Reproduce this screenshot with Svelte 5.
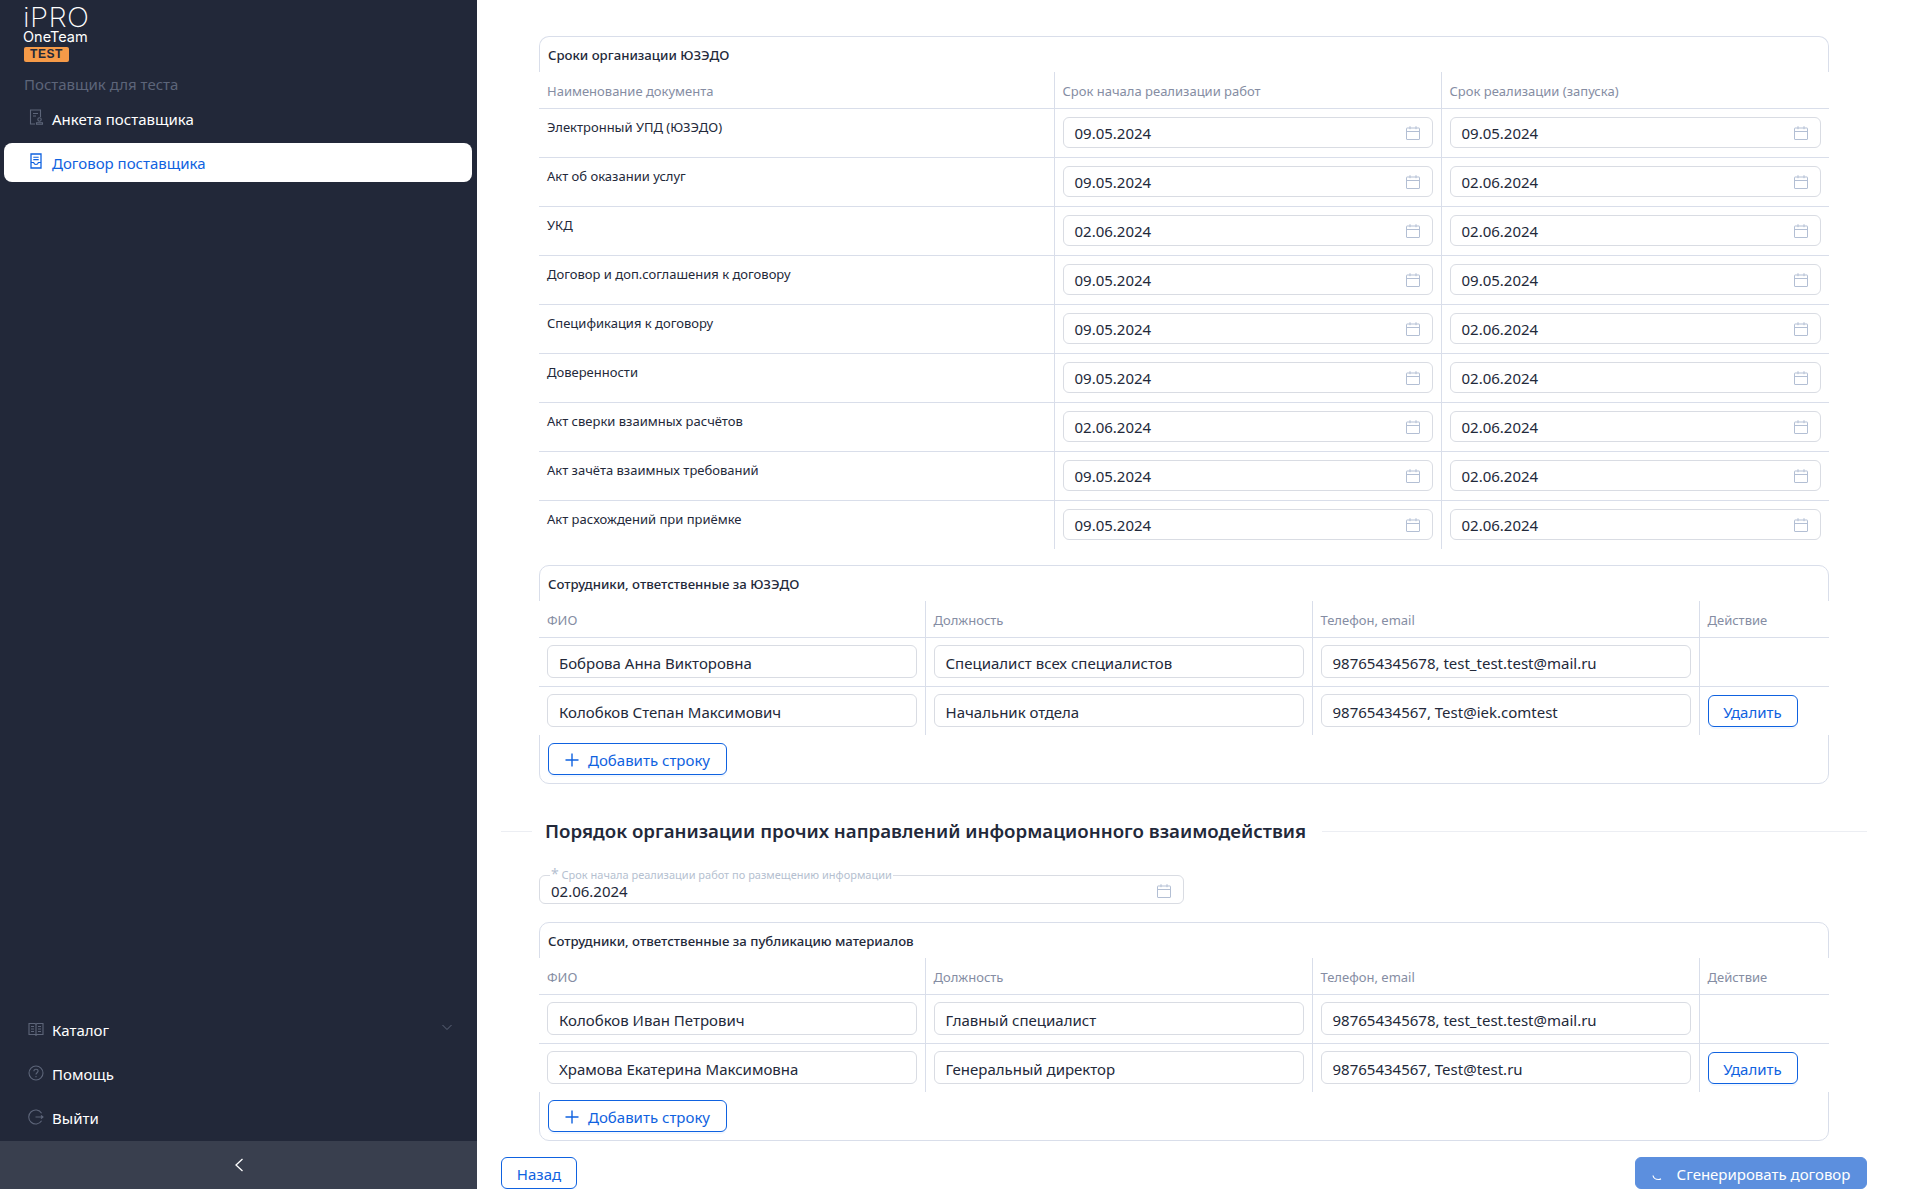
<script>
  // Sidebar menus
  const topMenu = [
    { label: 'Анкета поставщика', icon: 'form', active: false },
    { label: 'Договор поставщика', icon: 'doc', active: true }
  ];
  const bottomMenu = [
    { label: 'Каталог', icon: 'book', chevron: true },
    { label: 'Помощь', icon: 'help' },
    { label: 'Выйти', icon: 'exit' }
  ];

  // Сроки организации ЮЗЭДО
  const deadlines = [
    ['Электронный УПД (ЮЗЭДО)', '09.05.2024', '09.05.2024'],
    ['Акт об оказании услуг', '09.05.2024', '02.06.2024'],
    ['УКД', '02.06.2024', '02.06.2024'],
    ['Договор и доп.соглашения к договору', '09.05.2024', '09.05.2024'],
    ['Спецификация к договору', '09.05.2024', '02.06.2024'],
    ['Доверенности', '09.05.2024', '02.06.2024'],
    ['Акт сверки взаимных расчётов', '02.06.2024', '02.06.2024'],
    ['Акт зачёта взаимных требований', '09.05.2024', '02.06.2024'],
    ['Акт расхождений при приёмке', '09.05.2024', '02.06.2024']
  ];

  const employeeGroups = [
    {
      title: 'Сотрудники, ответственные за ЮЗЭДО',
      rows: [
        ['Боброва Анна Викторовна', 'Специалист всех специалистов', '987654345678, test_test.test@mail.ru'],
        ['Колобков Степан Максимович', 'Начальник отдела', '98765434567, Test@iek.comtest']
      ]
    },
    {
      title: 'Сотрудники, ответственные за публикацию материалов',
      rows: [
        ['Колобков Иван Петрович', 'Главный специалист', '987654345678, test_test.test@mail.ru'],
        ['Храмова Екатерина Максимовна', 'Генеральный директор', '98765434567, Test@test.ru']
      ]
    }
  ];
</script>

{#snippet calendar()}
  <svg class="cal" viewBox="0 0 16 16" width="16" height="16" fill="none" stroke="currentColor" stroke-width="1">
    <rect x="1.5" y="3" width="13" height="11.5" rx="0.5" />
    <path d="M1.5 6.5h13M5 1.2v3M11 1.2v3" />
  </svg>
{/snippet}

{#snippet menuIcon(name)}
  <svg class="menu-icon" viewBox="0 0 16 16" width="16" height="16" fill="none" stroke="currentColor" stroke-width="1.1">
    {#if name === 'form'}
      <path d="M7 15H2.5V1h10v7" />
      <path d="M5 4.5h5M5 7h3" />
      <circle cx="11.5" cy="10.5" r="1.7" />
      <path d="M8.5 15.2v-1.4h6v1.4z" />
    {:else if name === 'doc'}
      <path d="M3 1h10v14H3z" stroke-width="1.3" />
      <path d="M5.3 4.2h5.4M5.3 6.6h5.4M3 9.5h2.6c.4 1.4 1.2 2 2.4 2s2-.6 2.4-2H13" stroke-width="1.1" />
    {:else if name === 'book'}
      <path d="M1 2.5h6l1 1 1-1h6v11H9l-1 .8-1-.8H1zM8 3.5v10" />
      <path d="M3 5.5h3M3 8h3M3 10.5h3M10 5.5h3M10 8h3M10 10.5h3" />
    {:else if name === 'help'}
      <circle cx="8" cy="8" r="7" />
      <path d="M5.9 6.2c0-1.2 1-2 2.1-2s2.1.8 2.1 1.9c0 1.6-2.1 1.7-2.1 3.4" />
      <path d="M8 11v1.2" />
    {:else}
      <path d="M13.6 4.2A7 7 0 1 0 13.6 11.8" />
      <path d="M7.5 8h7.5M13 6.3 15 8l-2 1.7" />
    {/if}
  </svg>
{/snippet}

{#snippet employeesCard(group)}
  <section class="card">
    <h4 class="card-title">{group.title}</h4>
    <table class="table employees">
      <thead>
        <tr><th>ФИО</th><th>Должность</th><th>Телефон, email</th><th>Действие</th></tr>
      </thead>
      <tbody>
        {#each group.rows as row, i}
          <tr>
            {#each row as value}
              <td><div class="input text-input">{value}</div></td>
            {/each}
            <td>
              {#if i > 0}<button class="btn delete">Удалить</button>{/if}
            </td>
          </tr>
        {/each}
      </tbody>
    </table>
    <div class="card-footer">
      <button class="btn add">
        <svg viewBox="0 0 14 14" width="14" height="14" fill="none" stroke="currentColor" stroke-width="1.4"><path d="M7 .5v13M.5 7h13" /></svg>
        Добавить строку
      </button>
    </div>
  </section>
{/snippet}

<div class="layout">
  <aside class="sidebar">
    <div class="logo">
      <div class="logo-ipro">iPRO</div>
      <div class="logo-team">OneTeam</div>
      <div class="logo-badge">TEST</div>
    </div>
    <div class="supplier">Поставщик для теста</div>
    <nav class="menu">
      {#each topMenu as item}
        <a class="menu-item" class:active={item.active} href="#top">
          {@render menuIcon(item.icon)}
          <span>{item.label}</span>
        </a>
      {/each}
    </nav>
    <nav class="menu bottom">
      {#each bottomMenu as item}
        <a class="menu-item low" href="#top">
          {@render menuIcon(item.icon)}
          <span>{item.label}</span>
          {#if item.chevron}
            <svg class="chevron" viewBox="0 0 12 12" width="12" height="12" fill="none" stroke="currentColor"><path d="M1.5 4 6 8.5 10.5 4" /></svg>
          {/if}
        </a>
      {/each}
    </nav>
    <div class="collapse">
      <svg viewBox="0 0 12 16" width="12" height="16" fill="none" stroke="currentColor" stroke-width="1.3"><path d="M9.5 2 3 8l6.5 6" /></svg>
    </div>
  </aside>

  <main class="main">
    <div class="content">
      <section class="card first">
        <h4 class="card-title">Сроки организации ЮЗЭДО</h4>
        <table class="table deadlines">
          <thead>
            <tr><th>Наименование документа</th><th>Срок начала реализации работ</th><th>Срок реализации (запуска)</th></tr>
          </thead>
          <tbody>
            {#each deadlines as [name, start, launch]}
              <tr>
                <td class="doc-name">{name}</td>
                <td><div class="input date-input">{start}{@render calendar()}</div></td>
                <td><div class="input date-input">{launch}{@render calendar()}</div></td>
              </tr>
            {/each}
          </tbody>
        </table>
      </section>

      {@render employeesCard(employeeGroups[0])}

      <div class="divider">
        <span>Порядок организации прочих направлений информационного взаимодействия</span>
      </div>

      <div class="float-field">
        <span class="float-label"><i>*</i> Срок начала реализации работ по размещению информации</span>
        <div class="float-value">02.06.2024{@render calendar()}</div>
      </div>

      {@render employeesCard(employeeGroups[1])}
    </div>

    <div class="actions">
      <button class="btn back">Назад</button>
      <button class="btn generate">
        <svg viewBox="0 0 14 14" width="14" height="14" fill="none" stroke="currentColor" stroke-width="1.2"><path d="M1 8.5c.5 2.5 2.8 4 5.5 4 1 0 1.7-.2 2.5-.6" /></svg>
        Сгенерировать договор
      </button>
    </div>
  </main>
</div>

<style>
  :global(body) {
    margin: 0;
    background: #fff;
    overflow: hidden;
  }

  .layout {
    display: flex;
    height: 1189px;
    overflow: hidden;
    font-family: "Noto Sans", "Open Sans", sans-serif;
    color: #23293a;
  }

  /* === Sidebar === */
  .sidebar {
    width: 477px;
    flex: none;
    background: #222839;
    display: flex;
    flex-direction: column;
    color: #fff;
  }

  .logo {
    padding: 6px 0 0 23px;
  }

  .logo-ipro {
    font-family: Inter, sans-serif;
    font-weight: 200;
    font-size: 27px;
    line-height: 23px;
    letter-spacing: 0.4px;
    transform: scaleX(1.08);
    transform-origin: left center;
  }

  .logo-team {
    font-family: Inter, sans-serif;
    font-weight: 400;
    font-size: 14.5px;
    line-height: 15px;
  }

  .logo-badge {
    width: 45px;
    height: 15px;
    margin: 3px 0 0 1px;
    background: #f59a48;
    border-radius: 2px;
    color: #222839;
    font-family: "Liberation Sans", sans-serif;
    font-weight: 700;
    font-size: 12px;
    line-height: 15px;
    letter-spacing: 0.6px;
    text-align: center;
  }

  .supplier {
    margin: 12px 0 0 24px;
    color: #5d6579;
    font-size: 15px;
    line-height: 20px;
  }

  .menu {
    display: flex;
    flex-direction: column;
    padding: 0 5px 0 4px;
    gap: 5px;
    margin-top: 5px;
  }

  .menu.bottom {
    margin-top: auto;
    gap: 4px;
  }

  .menu-item {
    display: flex;
    align-items: center;
    gap: 8px;
    height: 39px;
    padding-left: 24px;
    border-radius: 8px;
    color: #fff;
    font-size: 15px;
    text-decoration: none;
    position: relative;
  }

  .menu-item .menu-icon {
    color: #5d6579;
    margin-top: -3px;
  }

  .menu-item.low {
    height: 40px;
  }

  .menu-item.active {
    background: #fff;
    color: #0f62e0;
  }

  .menu-item.active .menu-icon {
    color: #0f62e0;
  }

  .chevron {
    position: absolute;
    right: 19px;
    top: 11px;
    color: #5d6579;
  }

  .collapse {
    height: 48px;
    margin-top: 3px;
    background: #393f4e;
    display: flex;
    align-items: center;
    justify-content: center;
  }

  /* === Main === */
  .main {
    flex: 1;
    min-width: 0;
    padding: 36px 41px 0 24px;
    display: flex;
    flex-direction: column;
  }

  .content {
    padding: 0 38px;
    display: flex;
    flex-direction: column;
  }

  .card {
    border: 1px solid #d9deea;
    border-radius: 10px;
  }

  .card.first {
    border-bottom: none;
    border-radius: 10px 10px 0 0;
    margin-bottom: 16px;
  }

  .card-title {
    margin: 0;
    height: 35px;
    padding: 0 8px;
    font-size: 13.2px;
    line-height: 36px;
    font-weight: 500;
    color: #23293a;
  }

  .table {
    width: calc(100% + 2px);
    margin: 0 -1px;
    border-collapse: collapse;
    table-layout: fixed;
    background: #fff;
    position: relative;
  }

  .table th {
    box-sizing: border-box;
    height: 36px;
    padding: 2px 8px 0;
    text-align: left;
    font-weight: 400;
    font-size: 13px;
    color: #858da3;
    border-bottom: 1px solid #d9deea;
  }

  .table td {
    box-sizing: border-box;
    height: 49px;
    padding: 0 8px;
    font-size: 13px;
    border-bottom: 1px solid #d9deea;
  }

  .table tbody tr:last-child td {
    border-bottom: none;
  }

  .table th + th,
  .table td + td {
    border-left: 1px solid #d9deea;
  }

  .deadlines th:first-child {
    width: 515px;
  }

  .deadlines th:nth-child(2) {
    width: 387px;
  }

  .employees th:first-child {
    width: 386px;
  }

  .employees th:nth-child(2),
  .employees th:nth-child(3) {
    width: 387px;
  }

  .doc-name {
    vertical-align: top;
    padding-top: 9px !important;
    line-height: 18px;
  }

  .input {
    box-sizing: border-box;
    border: 1px solid #d9dce3;
    border-radius: 6px;
    background: #fff;
    color: #23293a;
    font-size: 15px;
    display: flex;
    align-items: center;
    justify-content: space-between;
    padding: 0 11px;
  }

  .date-input {
    height: 31px;
  }

  .text-input {
    height: 33px;
    padding-top: 2px;
  }

  .cal {
    color: #b3bfd4;
    flex: none;
  }

  .card-footer {
    padding: 8px;
    height: 32px;
  }

  .btn {
    box-sizing: border-box;
    font-family: inherit;
    font-size: 15px;
    border-radius: 6px;
    background: #fff;
    color: #0f62e0;
    border: 1px solid #0f62e0;
    height: 32px;
    padding: 2px 0 0;
    display: inline-flex;
    align-items: center;
    justify-content: center;
    box-shadow: 0 2px 0 rgba(5, 95, 255, 0.05);
  }

  .add {
    width: 179px;
    gap: 9px;
  }

  .delete {
    width: 90px;
  }

  /* === Section heading === */
  .divider {
    display: flex;
    align-items: center;
    margin: 25px -38px 0;
    height: 44px;
    font-size: 18.7px;
    font-weight: 600;
    color: #23293a;
    line-height: 28px;
  }

  .divider::before,
  .divider::after {
    content: '';
    height: 1px;
    background: #eceef3;
  }

  .divider::before {
    width: 31px;
    margin-right: 13px;
  }

  .divider::after {
    flex: 1;
    margin-left: 16px;
  }

  /* === Floating label date === */
  .float-field {
    position: relative;
    box-sizing: border-box;
    width: 645px;
    height: 29px;
    margin: 22px 0 18px;
    border: 1px solid #d9dce3;
    border-radius: 6px;
    padding: 0 11px;
  }

  .float-label {
    position: absolute;
    left: 10px;
    top: -9px;
    padding: 0 1px;
    background: #fff;
    color: #b5bfd0;
    font-size: 11px;
    line-height: 14px;
  }

  .float-label i {
    font-style: normal;
    font-size: 14px;
  }

  .float-value {
    display: flex;
    align-items: center;
    justify-content: space-between;
    height: 27px;
    padding-top: 1px;
    font-size: 15px;
  }

  /* === Bottom actions === */
  .actions {
    display: flex;
    justify-content: space-between;
    margin-top: 16px;
  }

  .back {
    width: 76px;
  }

  .generate {
    width: 232px;
    gap: 11px;
    background: #5c8fde;
    border-color: #5c8fde;
    color: #fff;
    box-shadow: none;
  }
</style>
